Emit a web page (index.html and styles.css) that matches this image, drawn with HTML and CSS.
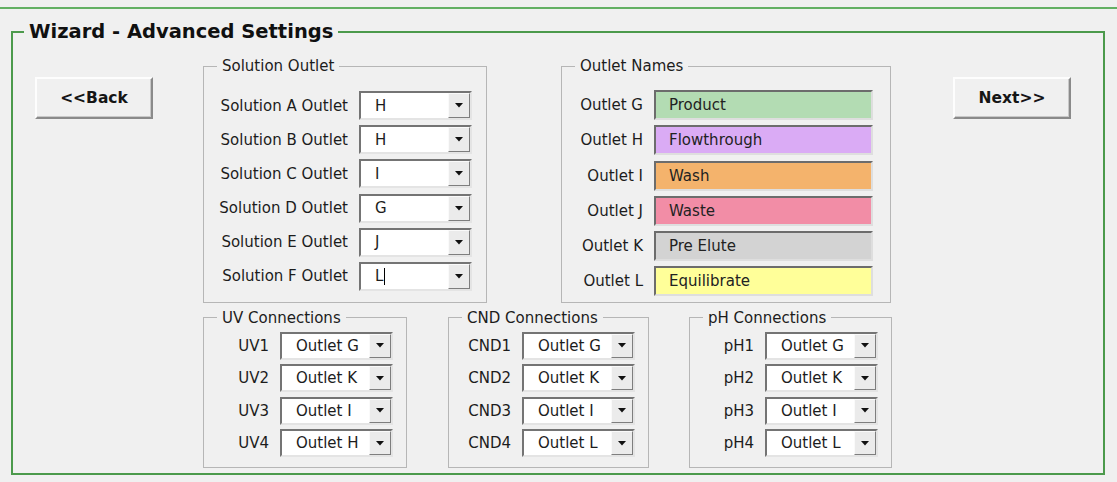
FILE: index.html
```html
<!DOCTYPE html>
<html>
<head>
<meta charset="utf-8">
<link rel="stylesheet" href="styles.css">
</head>
<body>
<div class="topline"></div>
<fieldset class="frame">
  <legend class="frame-title">Wizard - Advanced Settings</legend>
  <div class="frame-body">
    <button class="btn back">&lt;&lt;Back</button>
    <div class="center">
      <div class="row-top">
        <fieldset class="group sol">
          <legend>Solution Outlet</legend>
          <div class="grid sol-grid">
            <span class="lbl">Solution A Outlet</span>
            <div class="combo"><span class="val">H</span><span class="drop"><svg width="8" height="5" viewBox="0 0 8 5"><polygon points="0,0 8,0 4,4.5" fill="#111"/></svg></span></div>
            <span class="lbl">Solution B Outlet</span>
            <div class="combo"><span class="val">H</span><span class="drop"><svg width="8" height="5" viewBox="0 0 8 5"><polygon points="0,0 8,0 4,4.5" fill="#111"/></svg></span></div>
            <span class="lbl">Solution C Outlet</span>
            <div class="combo"><span class="val">I</span><span class="drop"><svg width="8" height="5" viewBox="0 0 8 5"><polygon points="0,0 8,0 4,4.5" fill="#111"/></svg></span></div>
            <span class="lbl">Solution D Outlet</span>
            <div class="combo"><span class="val">G</span><span class="drop"><svg width="8" height="5" viewBox="0 0 8 5"><polygon points="0,0 8,0 4,4.5" fill="#111"/></svg></span></div>
            <span class="lbl">Solution E Outlet</span>
            <div class="combo"><span class="val">J</span><span class="drop"><svg width="8" height="5" viewBox="0 0 8 5"><polygon points="0,0 8,0 4,4.5" fill="#111"/></svg></span></div>
            <span class="lbl">Solution F Outlet</span>
            <div class="combo"><span class="val">L<span class="caret"></span></span><span class="drop"><svg width="8" height="5" viewBox="0 0 8 5"><polygon points="0,0 8,0 4,4.5" fill="#111"/></svg></span></div>
          </div>
        </fieldset>
        <fieldset class="group names">
          <legend>Outlet Names</legend>
          <div class="grid names-grid">
            <span class="lbl">Outlet G</span><div class="nbox c-g">Product</div>
            <span class="lbl">Outlet H</span><div class="nbox c-h">Flowthrough</div>
            <span class="lbl">Outlet I</span><div class="nbox c-i">Wash</div>
            <span class="lbl">Outlet J</span><div class="nbox c-j">Waste</div>
            <span class="lbl">Outlet K</span><div class="nbox c-k">Pre Elute</div>
            <span class="lbl">Outlet L</span><div class="nbox c-l">Equilibrate</div>
          </div>
        </fieldset>
      </div>
      <div class="row-bottom">
        <fieldset class="group uv">
          <legend>UV Connections</legend>
          <div class="grid conn-grid">
            <span class="lbl">UV1</span>
            <div class="combo small"><span class="val">Outlet G</span><span class="drop"><svg width="8" height="5" viewBox="0 0 8 5"><polygon points="0,0 8,0 4,4.5" fill="#111"/></svg></span></div>
            <span class="lbl">UV2</span>
            <div class="combo small"><span class="val">Outlet K</span><span class="drop"><svg width="8" height="5" viewBox="0 0 8 5"><polygon points="0,0 8,0 4,4.5" fill="#111"/></svg></span></div>
            <span class="lbl">UV3</span>
            <div class="combo small"><span class="val">Outlet I</span><span class="drop"><svg width="8" height="5" viewBox="0 0 8 5"><polygon points="0,0 8,0 4,4.5" fill="#111"/></svg></span></div>
            <span class="lbl">UV4</span>
            <div class="combo small"><span class="val">Outlet H</span><span class="drop"><svg width="8" height="5" viewBox="0 0 8 5"><polygon points="0,0 8,0 4,4.5" fill="#111"/></svg></span></div>
          </div>
        </fieldset>
        <fieldset class="group cnd">
          <legend>CND Connections</legend>
          <div class="grid conn-grid">
            <span class="lbl">CND1</span>
            <div class="combo small"><span class="val">Outlet G</span><span class="drop"><svg width="8" height="5" viewBox="0 0 8 5"><polygon points="0,0 8,0 4,4.5" fill="#111"/></svg></span></div>
            <span class="lbl">CND2</span>
            <div class="combo small"><span class="val">Outlet K</span><span class="drop"><svg width="8" height="5" viewBox="0 0 8 5"><polygon points="0,0 8,0 4,4.5" fill="#111"/></svg></span></div>
            <span class="lbl">CND3</span>
            <div class="combo small"><span class="val">Outlet I</span><span class="drop"><svg width="8" height="5" viewBox="0 0 8 5"><polygon points="0,0 8,0 4,4.5" fill="#111"/></svg></span></div>
            <span class="lbl">CND4</span>
            <div class="combo small"><span class="val">Outlet L</span><span class="drop"><svg width="8" height="5" viewBox="0 0 8 5"><polygon points="0,0 8,0 4,4.5" fill="#111"/></svg></span></div>
          </div>
        </fieldset>
        <fieldset class="group ph">
          <legend>pH Connections</legend>
          <div class="grid conn-grid">
            <span class="lbl">pH1</span>
            <div class="combo small"><span class="val">Outlet G</span><span class="drop"><svg width="8" height="5" viewBox="0 0 8 5"><polygon points="0,0 8,0 4,4.5" fill="#111"/></svg></span></div>
            <span class="lbl">pH2</span>
            <div class="combo small"><span class="val">Outlet K</span><span class="drop"><svg width="8" height="5" viewBox="0 0 8 5"><polygon points="0,0 8,0 4,4.5" fill="#111"/></svg></span></div>
            <span class="lbl">pH3</span>
            <div class="combo small"><span class="val">Outlet I</span><span class="drop"><svg width="8" height="5" viewBox="0 0 8 5"><polygon points="0,0 8,0 4,4.5" fill="#111"/></svg></span></div>
            <span class="lbl">pH4</span>
            <div class="combo small"><span class="val">Outlet L</span><span class="drop"><svg width="8" height="5" viewBox="0 0 8 5"><polygon points="0,0 8,0 4,4.5" fill="#111"/></svg></span></div>
          </div>
        </fieldset>
      </div>
    </div>
    <button class="btn next">Next&gt;&gt;</button>
  </div>
</fieldset>
</body>
</html>
```
FILE: styles.css
```css
html, body {
  margin: 0;
  background: #f0f0f0;
}
body {
  width: 1117px;
  height: 482px;
  overflow: hidden;
  font-family: "DejaVu Sans", "Noto Sans", sans-serif;
  font-size: 15px;
  color: #1c1c1c;
}
.topline {
  height: 7px;
  border-bottom: 2px solid #63b063;
}
.frame {
  margin: 11px 0 0 11px;
  width: 1094px;
  box-sizing: border-box;
  border: 2px solid #4c9a4c;
  padding: 0;
  min-width: 0;
}
.frame-title {
  margin-left: 11px;
  padding: 0 5px;
  font-size: 19.5px;
  font-weight: bold;
  line-height: 24px;
  color: #101010;
}
.frame-body {
  display: flex;
  align-items: flex-start;
  padding: 0 0 5px 22px;
}
.btn {
  margin-top: 33px;
  width: 118px;
  height: 42px;
  box-sizing: border-box;
  padding: 0;
  font-family: "DejaVu Sans", sans-serif;
  font-weight: bold;
  font-size: 15.5px;
  color: #151515;
  background: #f0f0f0;
  border: 2px solid;
  border-color: #fdfdfd #8a8a8a #8a8a8a #fdfdfd;
  box-shadow: inset -1px -1px 0 #c8c8c8;
}
.back { margin-right: 50px; }
.next { margin-left: 61px; }
.center {
  width: 689px;
  display: flex;
  flex-direction: column;
}
.row-top {
  display: flex;
  align-items: stretch;
  gap: 74px;
  margin-top: 13px;
}
.row-bottom {
  display: flex;
  margin-top: 6px;
  gap: 41px;
}
.group {
  margin: 0;
  padding: 0;
  min-width: 0;
  box-sizing: border-box;
  border: 1px solid #b6b6b6;
}
.group legend {
  margin-left: 13px;
  padding: 0 5px;
  font-size: 15px;
  line-height: 18px;
}
.sol { width: 284px; }
.names { width: 330px; }
.uv { width: 204px; }
.cnd { width: 201px; margin-right: -1px; }
.ph { width: 203px; }
.grid {
  display: grid;
  column-gap: 11px;
  align-items: center;
}
.lbl {
  justify-self: end;
  white-space: nowrap;
}
.sol-grid {
  grid-template-columns: 1fr 113px;
  grid-auto-rows: 29px;
  row-gap: 5.2px;
  padding: 16px 14px 11px 0;
}
.names-grid {
  grid-template-columns: 1fr 219px;
  grid-auto-rows: 30px;
  row-gap: 5.3px;
  padding: 15px 17px 0 0;
}
.conn-grid {
  grid-template-columns: 1fr 113px;
  grid-auto-rows: 28px;
  row-gap: 4.4px;
  padding: 5px 13px 10px 0;
}
.combo {
  display: flex;
  height: 100%;
  box-sizing: border-box;
  border: 2px solid;
  border-color: #747474 #e4e4e4 #e4e4e4 #747474;
  background: #ffffff;
}
.val {
  flex: 1;
  padding-left: 14px;
  display: flex;
  align-items: center;
  white-space: nowrap;
  overflow: hidden;
}
.caret {
  display: inline-block;
  width: 1px;
  height: 17px;
  margin-left: 1px;
  background: #000;
}
.drop {
  width: 22px;
  box-sizing: border-box;
  border: 1px solid;
  border-color: #fafafa #7e7e7e #7e7e7e #fafafa;
  background: #ebebeb;
  display: flex;
  align-items: center;
  justify-content: center;
}
.drop svg { display: block; }
.nbox {
  height: 100%;
  box-sizing: border-box;
  border: 2px solid;
  border-color: #6c6c6c #dedede #dedede #6c6c6c;
  padding-left: 13px;
  display: flex;
  align-items: center;
  color: #222;
}
.c-g { background: #b3dcb3; }
.c-h { background: #daabf5; }
.c-i { background: #f4b36c; }
.c-j { background: #f28da6; }
.c-k { background: #d3d3d3; }
.c-l { background: #ffff99; }
```
